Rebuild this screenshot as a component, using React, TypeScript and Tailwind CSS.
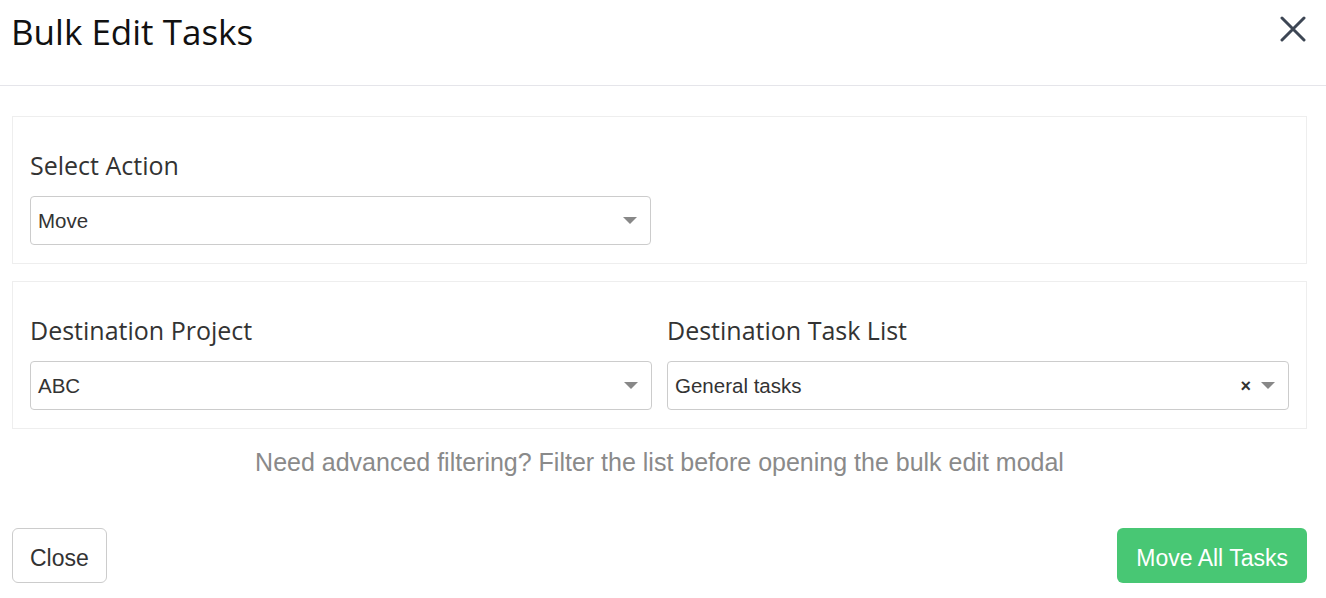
import React from "react";

const Caret = () => (
  <svg width="14" height="8" viewBox="0 0 14 8" className="shrink-0">
    <path d="M0 0 L14 0 L7 7 Z" fill="#888888" />
  </svg>
);

const FakeSelect = ({ value, clearable }: { value: string; clearable?: boolean }) => (
  <div className="flex h-[49px] items-center rounded-[4px] border border-[#cccccc] bg-white pl-[7px] pr-[13px]">
    <span className="flex-1 pt-[2px] text-[20.5px] text-[#333333] font-['Liberation_Sans',Arial,sans-serif]">
      {value}
    </span>
    {clearable && (
      <span className="mr-[10px] text-[18px] font-bold leading-none text-[#333333] font-['Liberation_Sans',Arial,sans-serif]">
        ×
      </span>
    )}
    <Caret />
  </div>
);

const Label = ({ children }: { children: React.ReactNode }) => (
  <div className="mb-[14px] text-[25px] text-[#333333] font-['Open_Sans',sans-serif] leading-[33px]">
    {children}
  </div>
);

export default function App() {
  return (
    <div className="h-[598px] w-[1326px] bg-white font-['Open_Sans',sans-serif]">
      {/* Header */}
      <div className="flex h-[86px] items-start justify-between border-b border-[#e5e5ea] pl-[11px] pr-[20px]">
        <h1 className="mt-[9px] text-[35px] leading-[46px] text-[#111111]">Bulk Edit Tasks</h1>
        <button className="mt-[16px] text-[#3d4654]">
          <svg width="26" height="26" viewBox="0 0 26 26">
            <path d="M2 2 L24 24 M24 2 L2 24" stroke="currentColor" strokeWidth="3" strokeLinecap="round" />
          </svg>
        </button>
      </div>

      <div className="pl-[12px] pr-[19px] pt-[30px]">
        {/* Action panel */}
        <div className="h-[148px] border border-[#eeeeee] px-[17px] pt-[32px]">
          <Label>Select Action</Label>
          <div className="w-[621px]">
            <FakeSelect value="Move" />
          </div>
        </div>

        {/* Destination panel */}
        <div className="mt-[17px] h-[148px] border border-[#eeeeee] px-[17px] pt-[32px]">
          <div className="grid grid-cols-2 gap-[15px]">
            <div>
              <Label>Destination Project</Label>
              <FakeSelect value="ABC" />
            </div>
            <div>
              <Label>Destination Task List</Label>
              <FakeSelect value="General tasks" clearable />
            </div>
          </div>
        </div>

        <p className="mt-[16px] text-center text-[25px] leading-[34px] text-[#8a8a8a] font-['Liberation_Sans',Arial,sans-serif]">
          Need advanced filtering? Filter the list before opening the bulk edit modal
        </p>

        {/* Footer */}
        <div className="mt-[49px] flex items-center justify-between">
          <button className="h-[55px] rounded-[6px] border border-[#cccccc] bg-white px-[17px] pt-[5px] text-[23px] text-[#333333] font-['Liberation_Sans',Arial,sans-serif]">
            Close
          </button>
          <button className="h-[55px] rounded-[6px] bg-[#48c774] px-[19px] pt-[5px] text-[23px] text-white font-['Liberation_Sans',Arial,sans-serif]">
            Move All Tasks
          </button>
        </div>
      </div>
    </div>
  );
}
